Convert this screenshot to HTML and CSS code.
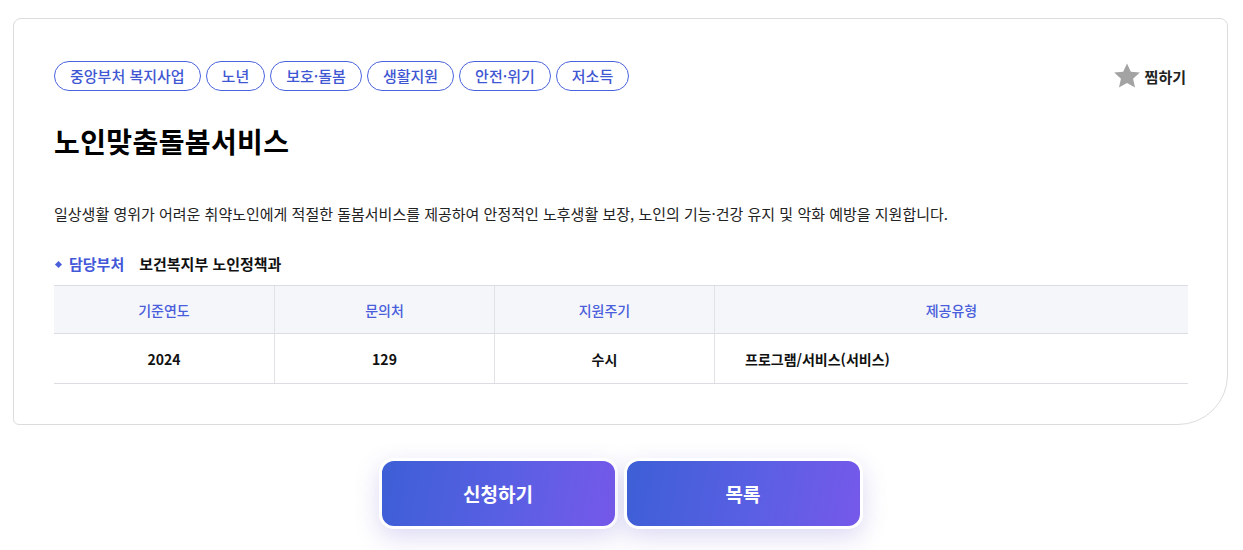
FILE: index.html
```html
<!DOCTYPE html>
<html lang="ko">
<head>
<meta charset="utf-8">
<link rel="stylesheet" href="styles.css">
</head>
<body>
<div class="page">
  <section class="card">
    <div class="top-row">
      <ul class="tags">
        <li class="tag">중앙부처 복지사업</li>
        <li class="tag">노년</li>
        <li class="tag">보호·돌봄</li>
        <li class="tag">생활지원</li>
        <li class="tag">안전·위기</li>
        <li class="tag">저소득</li>
      </ul>
      <button class="fav" type="button">
        <svg class="star" viewBox="0 0 24 24" width="28" height="28" aria-hidden="true">
          <path d="M12 1.2l3.3 7.1 7.7.8-5.8 5.2 1.7 7.6L12 18l-6.9 3.9 1.7-7.6L1 9.1l7.7-.8z" fill="#a3a3a3"/>
        </svg>
        <span>찜하기</span>
      </button>
    </div>
    <h1 class="title">노인맞춤돌봄서비스</h1>
    <p class="desc">일상생활 영위가 어려운 취약노인에게 적절한 돌봄서비스를 제공하여 안정적인 노후생활 보장, 노인의 기능·건강 유지 및 악화 예방을 지원합니다.</p>
    <div class="dept">
      <span class="dept-label">담당부처</span>
      <span class="dept-value">보건복지부 노인정책과</span>
    </div>
    <div class="info-table">
      <div class="cell head">기준연도</div>
      <div class="cell head">문의처</div>
      <div class="cell head">지원주기</div>
      <div class="cell head">제공유형</div>
      <div class="cell">2024</div>
      <div class="cell">129</div>
      <div class="cell">수시</div>
      <div class="cell left">프로그램/서비스(서비스)</div>
    </div>
  </section>
  <div class="actions">
    <button class="btn" type="button">신청하기</button>
    <button class="btn" type="button">목록</button>
  </div>
</div>
</body>
</html>
```

FILE: styles.css
```css
* { box-sizing: border-box; }
html, body { margin: 0; padding: 0; background: #fff; }
body {
  font-family: "Noto Sans CJK KR", "Noto Sans", sans-serif;
  color: #111;
}
.page { padding: 18px 15px 30px 13px; }
.card {
  border: 1px solid #dcdcdc;
  border-radius: 8px 8px 50px 6px;
  padding: 42px 39px 40px 40px;
  background: #fff;
}
.top-row {
  display: flex;
  justify-content: space-between;
  align-items: center;
}
.tags {
  display: flex;
  gap: 5px;
  list-style: none;
  margin: 0;
  padding: 0;
}
.tag {
  height: 30px;
  line-height: 28px;
  padding: 0 15px;
  border: 1px solid #4a63dd;
  border-radius: 15px;
  color: #3f57d2;
  font-size: 15px;
  font-weight: 500;
}
.fav {
  display: flex;
  align-items: center;
  gap: 4px;
  border: 0;
  background: none;
  padding: 0;
  margin-right: 2px;
  font-family: inherit;
  font-size: 15px;
  font-weight: 700;
  color: #222;
  cursor: pointer;
}
.title {
  margin: 30px 0 0;
  font-size: 28px;
  font-weight: 700;
  line-height: 40px;
  letter-spacing: 0.4px;
  color: #000;
}
.desc {
  margin: 41px 0 0;
  font-size: 15px;
  line-height: 24px;
  color: #222;
}
.dept {
  display: flex;
  align-items: center;
  gap: 15px;
  margin-top: 26px;
  font-size: 15px;
  font-weight: 700;
  line-height: 24px;
}
.dept-label {
  position: relative;
  padding-left: 15px;
  color: #4358d8;
}
.dept-label::before {
  content: "";
  position: absolute;
  left: 2px;
  top: 10px;
  width: 5px;
  height: 5px;
  background: #4a5fdb;
  transform: rotate(45deg);
}
.dept-value { color: #111; }
.info-table {
  display: grid;
  grid-template-columns: 220px 220px 220px 1fr;
  margin-top: 9px;
  border-top: 1px solid #dcdde3;
  border-bottom: 1px solid #dcdde3;
}
.cell {
  display: flex;
  align-items: center;
  justify-content: center;
  height: 49px;
  font-size: 14px;
  font-weight: 700;
  color: #111;
  border-left: 1px solid #e1e2e6;
}
.cell:nth-child(4n+1) { border-left: 0; }
.cell.head {
  height: 48px;
  background: #f5f6fa;
  color: #4a5edb;
  font-weight: 500;
  border-bottom: 1px solid #dcdde3;
}
.cell.left { justify-content: flex-start; padding-left: 30px; }
.actions {
  display: flex;
  justify-content: center;
  gap: 6px;
  margin-top: 33px;
}
.btn {
  width: 239px;
  height: 71px;
  border: 3px solid #fff;
  border-radius: 15px;
  background: linear-gradient(100deg, #3d5fd6 0%, #5a5fe3 55%, #7659ea 100%);
  box-shadow: 0 8px 24px rgba(90, 80, 200, 0.22);
  color: #fff;
  font-family: inherit;
  font-size: 19px;
  font-weight: 700;
  cursor: pointer;
}
```
